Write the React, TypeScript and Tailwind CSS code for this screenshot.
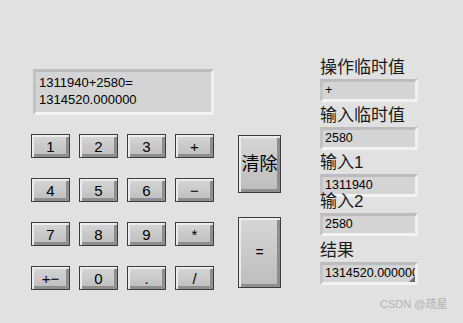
import React from "react";

const keys = ["1", "2", "3", "+", "4", "5", "6", "−", "7", "8", "9", "*", "+−", "0", ".", "/"];

const font = { fontFamily: '"Liberation Sans", "Noto Sans CJK SC", sans-serif' };

const bevelBtn =
  "flex items-center justify-center border border-[#3c3c3c] bg-gradient-to-b from-[#d6d6d6] to-[#bdbdbd] text-black shadow-[inset_2px_2px_0_#ececec,inset_-3px_-3px_0_#8e8e8e]";

const sunken =
  "border-[3px] border-t-[#bcbcbc] border-l-[#c4c4c4] border-b-[#f3f3f3] border-r-[#f0f0f0] bg-[#d4d4d4]";

function Field({ label, value, mt, corner }: { label: string; value: string; mt: string; corner?: boolean }) {
  return (
    <div className={`flex flex-col ${mt}`}>
      <div className="relative z-10 h-[22px] text-[17px] leading-[22px] text-[#1a1a1a]">{label}</div>
      <div className={`relative h-[23px] w-[98px] overflow-hidden ${sunken} pl-[2px] text-[12.5px] leading-[17px] text-black whitespace-nowrap`}>
        {value}
        {corner && (
          <svg className="absolute bottom-0 right-0" width="6" height="6" viewBox="0 0 6 6">
            <path d="M6 0 L6 6 L0 6 Z" fill="#6a6a6a" />
          </svg>
        )}
      </div>
    </div>
  );
}

export default function App() {
  return (
    <div className="relative flex h-[323px] w-[463px] bg-[#e1e1e1]" style={font}>
      {/* Display + keypad */}
      <div className="flex flex-col pl-[31px] pt-[69px]">
        <div className={`ml-[2px] h-[46px] w-[181px] ${sunken} px-[3px] pt-[2px] text-[13px] leading-[17px] text-black`}>
          <div>1311940+2580=</div>
          <div>1314520.000000</div>
        </div>
        <div className="mt-[19px] grid grid-cols-[repeat(4,39px)] gap-x-[9px] gap-y-[20px]">
          {keys.map((k) => (
            <button key={k} className={`${bevelBtn} h-[24px] w-[39px] text-[15px] leading-none`}>
              {k}
            </button>
          ))}
        </div>
      </div>

      {/* Clear / equals */}
      <div className="ml-[24px] flex flex-col pt-[135px]">
        <button className={`${bevelBtn} h-[58px] w-[43px] text-[18px]`}>清除</button>
        <button className={`${bevelBtn} mt-[24px] h-[71px] w-[43px] text-[14px]`}>=</button>
      </div>

      {/* Temp values */}
      <div className="ml-[39px] flex flex-col pt-[57px]">
        <Field label="操作临时值" value="+" mt="mt-0" />
        <Field label="输入临时值" value="2580" mt="mt-[3px]" />
        <Field label="输入1" value="1311940" mt="mt-[2px]" />
        <Field label="输入2" value="2580" mt="-mt-[6px]" />
        <Field label="结果" value="1314520.000000" mt="mt-[4px]" corner />
      </div>

      <div className="absolute left-[380px] top-[296px] text-[11px] text-[#b3b3b3]">CSDN @疏星</div>
    </div>
  );
}
